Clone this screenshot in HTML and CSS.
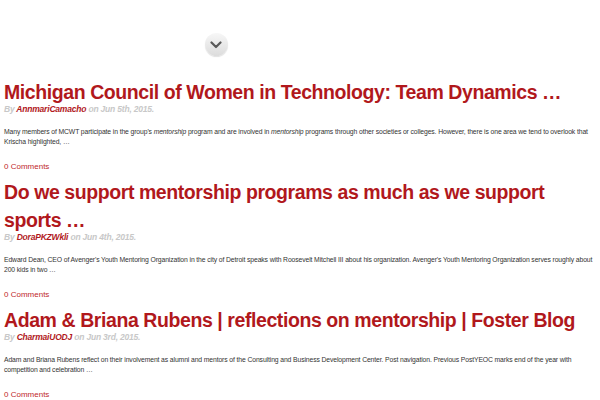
FILE: index.html
```html
<!DOCTYPE html>
<html lang="en">
<head>
  <meta charset="UTF-8">
  <meta name="viewport" content="width=device-width, initial-scale=1.0">
  <title>Mentorship Posts</title>
  <link rel="stylesheet" href="styles.css">
</head>
<body>
  <div class="page">
    <div class="more-wrap">
      <button class="more-btn" aria-label="More">
        <svg width="12" height="8" viewBox="0 0 12 8"><path d="M1.5 1.5 L6 6 L10.5 1.5" fill="none" stroke="#5a5a5a" stroke-width="2.2" stroke-linecap="round" stroke-linejoin="round"/></svg>
      </button>
    </div>

    <div class="post">
      <h2 class="post-title">Michigan Council of Women in Technology: Team Dynamics …</h2>
      <p class="post-meta">By <a href="#">AnnmariCamacho</a> on Jun 5th, 2015.</p>
      <p class="post-excerpt">Many members of MCWT participate in the group's <em>mentorship</em> program and are involved in <em>mentorship</em> programs through other societies or colleges. However, there is one area we tend to overlook that Krischa highlighted, …</p>
      <a class="post-comments" href="#">0 Comments</a>
    </div>

    <div class="post">
      <h2 class="post-title">Do we support mentorship programs as much as we support sports …</h2>
      <p class="post-meta">By <a href="#">DoraPKZWkli</a> on Jun 4th, 2015.</p>
      <p class="post-excerpt">Edward Dean, CEO of Avenger's Youth Mentoring Organization in the city of Detroit speaks with Roosevelt Mitchell III about his organization. Avenger's Youth Mentoring Organization serves roughly about 200 kids in two …</p>
      <a class="post-comments" href="#">0 Comments</a>
    </div>

    <div class="post">
      <h2 class="post-title">Adam &amp; Briana Rubens | reflections on mentorship | Foster Blog</h2>
      <p class="post-meta">By <a href="#">CharmaiUODJ</a> on Jun 3rd, 2015.</p>
      <p class="post-excerpt">Adam and Briana Rubens reflect on their involvement as alumni and mentors of the Consulting and Business Development Center. Post navigation. Previous PostYEOC marks end of the year with competition and celebration …</p>
      <a class="post-comments" href="#">0 Comments</a>
    </div>
  </div>
</body>
</html>
```

FILE: styles.css
```css
body {
  font-family: "Liberation Sans", Arial, sans-serif;
  background-color: #fff;
  margin: 0;
  padding: 0;
}
.page {
  padding-left: 4px;
  width: 596px;
}
.more-wrap {
  display: flex;
  justify-content: center;
  width: 424px;
  padding-top: 33px;
  height: 78px;
  box-sizing: border-box;
}
.more-btn {
  display: flex;
  justify-content: center;
  align-items: center;
  width: 23px;
  height: 23px;
  padding: 0;
  border: none;
  border-radius: 50%;
  background: linear-gradient(#f7f7f7, #dcdcdc);
  box-shadow: 0 1px 1px rgba(0, 0, 0, 0.12);
  cursor: pointer;
}
.post {
  margin-bottom: 5px;
}
.post-title {
  margin: 0;
  font-size: 19.5px;
  line-height: 28px;
  letter-spacing: -0.42px;
  font-weight: bold;
  color: #b1181c;
}
.post-meta {
  margin: -4px 0 0;
  font-size: 8.5px;
  line-height: 14px;
  letter-spacing: -0.2px;
  font-weight: bold;
  font-style: italic;
  color: #c8c8c8;
}
.post-meta a {
  color: #b1181c;
  text-decoration: none;
}
.post-excerpt {
  margin: 11px 0 0;
  font-size: 6.8px;
  line-height: 10px;
  letter-spacing: -0.11px;
  color: #333;
}
.post-excerpt em {
  font-style: italic;
}
.post-comments {
  display: block;
  margin-top: 14px;
  font-size: 8px;
  line-height: 12px;
  color: #c0282b;
  text-decoration: none;
}
```
